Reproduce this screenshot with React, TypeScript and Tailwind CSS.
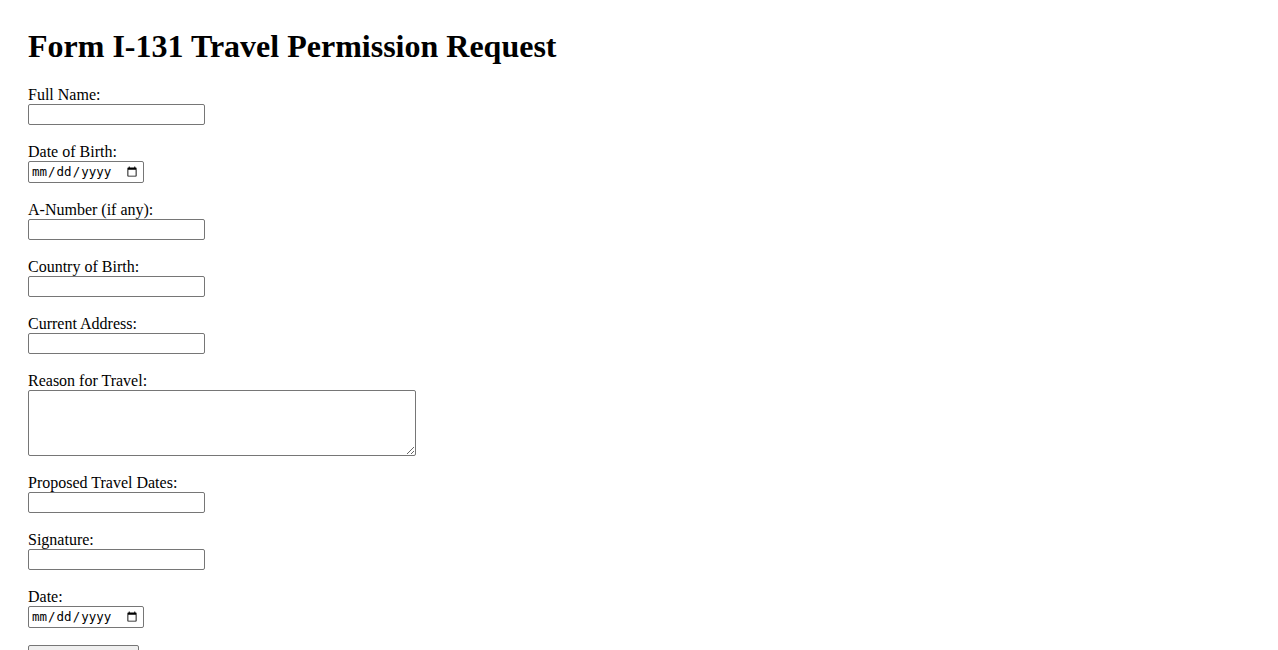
import React from 'react';

const textInput =
  'block w-[177px] h-[21px] border border-[#767676] rounded-[2px] bg-white px-[2px] py-[1px] text-[13.33px] font-["Liberation_Sans",Arial,sans-serif]';
const dateInput =
  'block w-[116px] h-[22px] border border-[#767676] rounded-[2px] bg-white pl-[2px] pr-[3px] text-[12.5px] text-black font-["DejaVu_Sans_Mono",monospace]';

const fields: { label: string; type: 'text' | 'date' | 'textarea' }[] = [
  { label: 'Full Name:', type: 'text' },
  { label: 'Date of Birth:', type: 'date' },
  { label: 'A-Number (if any):', type: 'text' },
  { label: 'Country of Birth:', type: 'text' },
  { label: 'Current Address:', type: 'text' },
  { label: 'Reason for Travel:', type: 'textarea' },
  { label: 'Proposed Travel Dates:', type: 'text' },
  { label: 'Signature:', type: 'text' },
  { label: 'Date:', type: 'date' },
];

export default function App() {
  return (
    <div className="min-h-[650px] bg-white px-[28px] pt-[28px] text-black font-['Liberation_Serif','Times_New_Roman',serif]">
      <h1 className="text-[32px] font-bold leading-[37px] mb-[21px]">Form I-131 Travel Permission Request</h1>
      <form onSubmit={(e) => e.preventDefault()}>
        {fields.map((f) => (
          <div key={f.label} className="mb-[16px]">
            <label className="block h-[18px] text-[16px] leading-[18px]">{f.label}</label>
            {f.type === 'textarea' && (
              <div className="h-[68px]">
                <textarea className="block w-[388px] h-[66px] border border-[#767676] rounded-[2px] p-[2px] text-[13.33px] font-['Liberation_Mono',monospace]" />
              </div>
            )}
            {f.type === 'date' && (
              <div className="h-[24px]">
                <input type="date" className={dateInput} />
              </div>
            )}
            {f.type === 'text' && (
              <div className="h-[23px]">
                <input type="text" className={textInput} />
              </div>
            )}
          </div>
        ))}
        <button
          type="submit"
          className="block -mt-[1px] w-[111px] h-[21px] border border-[#767676] rounded-[2px] bg-[#efefef] text-[13.33px] font-['Liberation_Sans',Arial,sans-serif]"
        >
          Submit Request
        </button>
      </form>
    </div>
  );
}
